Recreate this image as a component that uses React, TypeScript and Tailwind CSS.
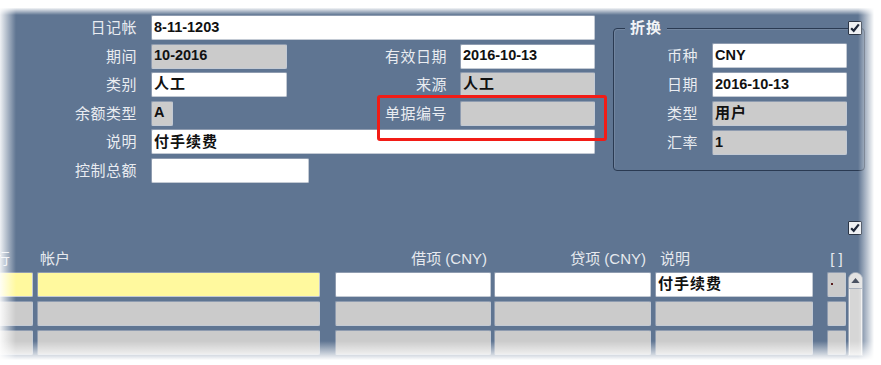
import type { ReactNode } from "react";

type Tone = "white" | "gray" | "yellow";

const tones: Record<Tone, string> = {
  white: "bg-white",
  gray: "bg-[#cbcbcb]",
  yellow: "bg-[#fff99e]",
};

const Field = ({
  w,
  tone = "white",
  cjk = false,
  className = "",
  children,
}: {
  w: string;
  tone?: Tone;
  cjk?: boolean;
  className?: string;
  children?: ReactNode;
}) => (
  <div
    className={`h-[25px] ${w} ${tones[tone]} ${className} flex shrink-0 items-center overflow-hidden whitespace-nowrap rounded-[2px] border border-[#8f9cb0] border-r-[#c3cad4] border-b-[#c3cad4] pl-[2px] font-bold text-[#111] ${
      cjk ? "text-[15px] tracking-[1px]" : "text-[14.5px]"
    }`}
  >
    {children}
  </div>
);

const Label = ({ w, children }: { w: string; children: ReactNode }) => (
  <div className={`${w} shrink-0 text-right text-[15px] leading-none tracking-[0.5px] text-[#e9ecf1]`}>
    {children}
  </div>
);

const Checkbox = ({ className = "" }: { className?: string }) => (
  <div className={`${className} h-[14px] w-[14px] rounded-[1px] border border-[#2b3545] bg-[#eef0f3]`}>
    <svg viewBox="0 0 14 14" className="h-full w-full">
      <path d="M2.5 7.2 L5.5 10.2 L11.5 2.8" fill="none" stroke="#1d2638" strokeWidth="2.6" />
    </svg>
  </div>
);

// bottom grid columns
const columns: { w: string; ml: string; cells: Tone[]; texts?: ReactNode[] }[] = [
  { w: "w-[40px]", ml: "ml-[-7px]", cells: ["yellow", "gray", "gray"] },
  { w: "w-[283px]", ml: "ml-[4px]", cells: ["yellow", "gray", "gray"] },
  { w: "w-[156px]", ml: "ml-[15px]", cells: ["white", "gray", "gray"] },
  { w: "w-[157px]", ml: "ml-[3px]", cells: ["white", "gray", "gray"] },
  { w: "w-[158px]", ml: "ml-[4px]", cells: ["white", "gray", "gray"], texts: ["付手续费"] },
];

export default function App() {
  return (
    <div className="relative h-[365px] w-[881px] overflow-hidden bg-[#5f7592] font-['Liberation_Sans','Noto_Sans_CJK_SC',sans-serif]">
      {/* header block */}
      <div className="flex pt-[15px]">
        <div className="flex w-[595px] flex-col gap-[3.6px]">
          <div className="flex h-[25px] items-center">
            <Label w="w-[137px]">日记帐</Label>
            <Field w="w-[444px]" className="ml-[14px]">8-11-1203</Field>
          </div>
          <div className="flex h-[25px] items-center">
            <Label w="w-[137px]">期间</Label>
            <Field w="w-[136px]" tone="gray" className="ml-[14px]">10-2016</Field>
            <Label w="w-[160px]">有效日期</Label>
            <Field w="w-[135px]" className="ml-[13px]">2016-10-13</Field>
          </div>
          <div className="flex h-[25px] items-center">
            <Label w="w-[137px]">类别</Label>
            <Field w="w-[136px]" cjk className="ml-[14px]">人工</Field>
            <Label w="w-[160px]">来源</Label>
            <Field w="w-[135px]" tone="gray" cjk className="ml-[13px]">人工</Field>
          </div>
          <div className="flex h-[25px] items-center">
            <Label w="w-[137px]">余额类型</Label>
            <Field w="w-[22px]" tone="gray" className="ml-[14px]">A</Field>
            <Label w="w-[274px]">单据编号</Label>
            <Field w="w-[135px]" tone="gray" className="ml-[13px]" />
          </div>
          <div className="flex h-[25px] items-center">
            <Label w="w-[137px]">说明</Label>
            <Field w="w-[444px]" cjk className="ml-[14px]">付手续费</Field>
          </div>
          <div className="flex h-[25px] items-center">
            <Label w="w-[137px]">控制总额</Label>
            <Field w="w-[158px]" className="ml-[14px]" />
          </div>
        </div>

        {/* 折换 group */}
        <div className="relative ml-[18px] mt-[13px] h-[143px] w-[252px] rounded-[4px] border border-[#2a3a52] shadow-[inset_1px_1px_0_rgba(255,255,255,0.12)]">
          <span className="absolute -top-[9px] left-[11px] bg-[#5f7592] px-[5px] text-[15px] font-bold leading-[16px] tracking-[1px] text-[#f2f4f7]">
            折换
          </span>
          <Checkbox className="absolute -top-[8px] right-[2px]" />
          <div className="flex flex-col gap-[4px] pt-[14px]">
            <div className="flex h-[25px] items-center">
              <Label w="w-[84px]">币种</Label>
              <Field w="w-[135px]" className="ml-[14px]">CNY</Field>
            </div>
            <div className="flex h-[25px] items-center">
              <Label w="w-[84px]">日期</Label>
              <Field w="w-[135px]" className="ml-[14px]">2016-10-13</Field>
            </div>
            <div className="flex h-[25px] items-center">
              <Label w="w-[84px]">类型</Label>
              <Field w="w-[135px]" tone="gray" cjk className="ml-[14px]">用户</Field>
            </div>
            <div className="flex h-[25px] items-center">
              <Label w="w-[84px]">汇率</Label>
              <Field w="w-[135px]" tone="gray" className="ml-[14px]">1</Field>
            </div>
          </div>
        </div>
      </div>

      {/* highlight around 单据编号 */}
      <div className="absolute left-[377px] top-[95px] h-[46px] w-[230px] rounded-[3px] border-[3px] border-[#f21c16]" />

      {/* lines block */}
      <div className="mt-[38px]">
        <Checkbox className="ml-[848px]" />
        <div className="mt-[14px] flex h-[20px] items-center text-[15px] leading-none text-[#e6e9ee]">
          <div className="ml-[-7px] w-[40px] pl-[2px]">行</div>
          <div className="ml-[4px] w-[283px] pl-[3px]">帐户</div>
          <div className="ml-[15px] w-[156px] pr-[4px] text-right">借项 (CNY)</div>
          <div className="ml-[3px] w-[157px] pr-[5px] text-right">贷项 (CNY)</div>
          <div className="ml-[4px] w-[158px] pl-[5px]">说明</div>
          <div className="ml-[14px] w-[19px] text-center">[ ]</div>
        </div>
        <div className="mt-[3px] flex">
          {columns.map((c, i) => (
            <div key={i} className={`${c.ml} flex flex-col gap-[4px]`}>
              {c.cells.map((t, j) => (
                <Field key={j} w={c.w} tone={t} cjk>
                  {c.texts?.[j]}
                </Field>
              ))}
            </div>
          ))}
          <div className="ml-[14px] flex flex-col gap-[4px]">
            <Field w="w-[19px]" tone="gray">
              <span className="ml-[1px] h-[2px] w-[2px] bg-[#5a1e1e]" />
            </Field>
            <Field w="w-[19px]" tone="gray" />
            <Field w="w-[19px]" tone="gray" />
          </div>
          {/* scrollbar */}
          <div className="ml-[2px] flex h-[84px] w-[15px] flex-col overflow-hidden rounded-t-[8px] border border-[#9aa5b5] bg-[#d6d6d6]">
            <div className="flex h-[16px] items-center justify-center border-b border-[#a9b1bd] bg-[#e2e2e2]">
              <svg viewBox="0 0 10 6" className="h-[5px] w-[9px]">
                <path d="M0 6 L5 0 L10 6 Z" fill="#4a5262" />
              </svg>
            </div>
            <div className="flex-1 border-x border-[#eeeeee]" />
          </div>
        </div>
      </div>

      {/* soft faded screenshot edges */}
      <div className="pointer-events-none absolute inset-x-0 top-0 h-[15px] bg-linear-to-b from-white from-50% to-transparent" />
      <div className="pointer-events-none absolute bottom-0 left-0 top-0 w-[16px] bg-linear-to-r from-white/90 to-transparent" />
      <div className="pointer-events-none absolute bottom-0 left-[858px] top-0 w-[23px] bg-linear-to-r from-transparent to-white to-70%" />
      <div className="pointer-events-none absolute inset-x-0 bottom-0 h-[24px] bg-linear-to-b from-transparent to-white to-80%" />
    </div>
  );
}
